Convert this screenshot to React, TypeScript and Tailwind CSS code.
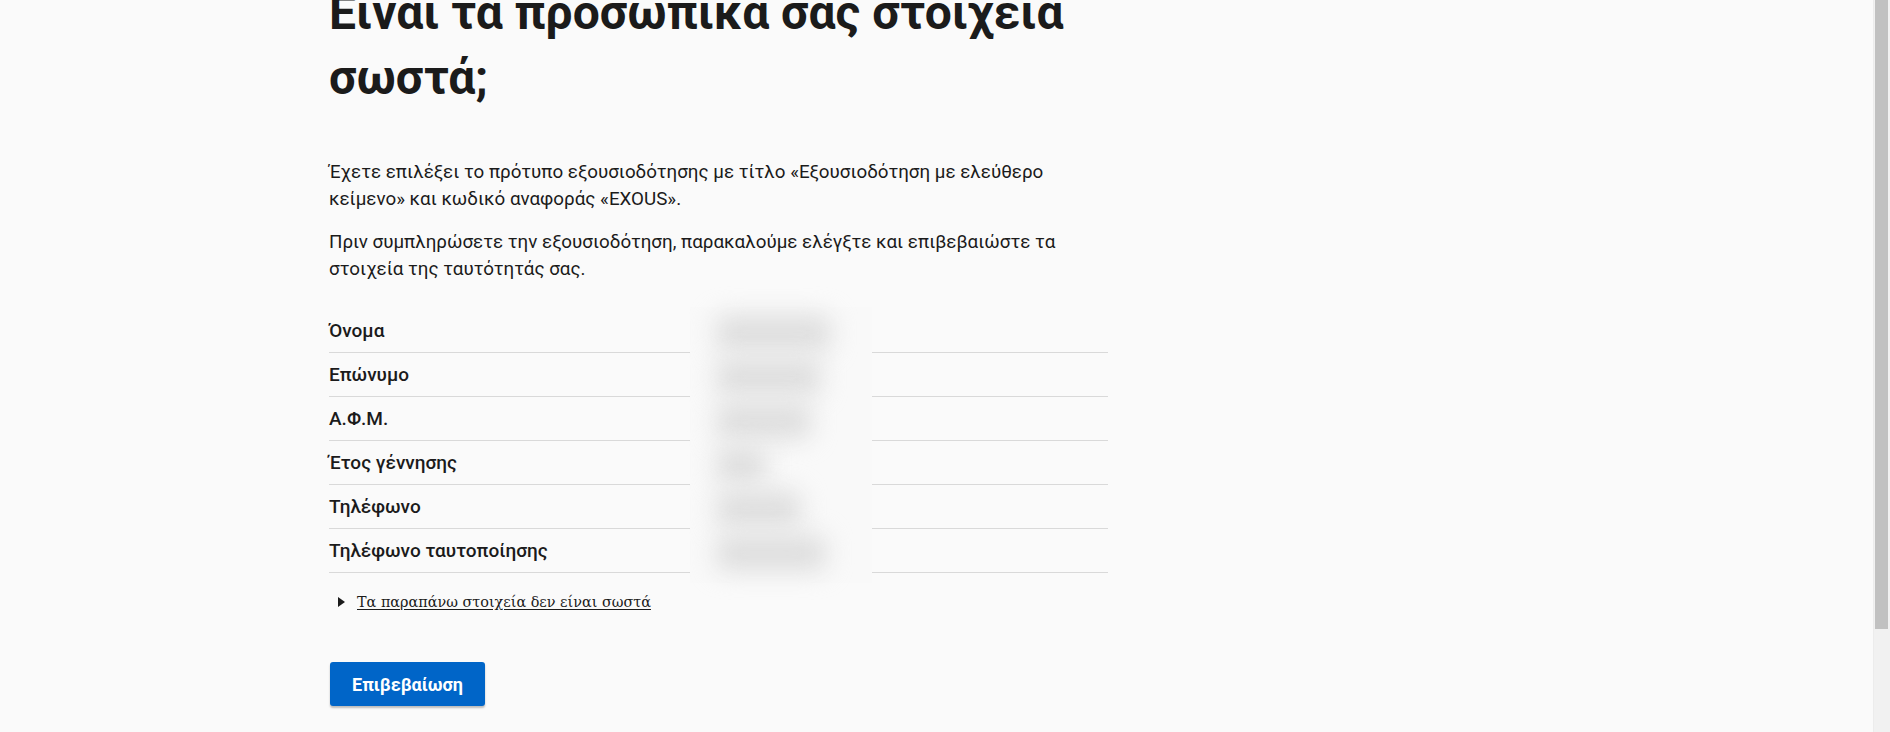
import React from "react";

const rows = [
  { label: "Όνομα", blob: "w-[115px]" },
  { label: "Επώνυμο", blob: "w-[105px]" },
  { label: "Α.Φ.Μ.", blob: "w-[95px]" },
  { label: "Έτος γέννησης", blob: "w-[50px]" },
  { label: "Τηλέφωνο", blob: "w-[85px]" },
  { label: "Τηλέφωνο ταυτοποίησης", blob: "w-[110px]" },
];

function Scrollbar() {
  return (
    <div className="w-[17px] shrink-0 bg-[#f1f1f1] border-l border-[#ececec]">
      <div className="h-[629px] ml-[1px] mr-[2px] bg-[#c1c1c1]" />
    </div>
  );
}

function DetailsList() {
  return (
    <div className="relative mt-[26px]">
      <dl>
        {rows.map((row) => (
          <div key={row.label} className="flex border-b border-[#d9d9d9] py-2">
            <dt className="text-[19px] leading-[27px] font-medium">{row.label}</dt>
          </div>
        ))}
      </dl>
      {/* blurred personal data */}
      <div className="absolute top-[-2px] left-[361px] w-[182px] h-[276px] bg-[#f9f9f9] flex flex-col gap-[8px] pt-[8px] pl-[26px]">
        {rows.map((row) => (
          <div key={row.label} className={`h-[36px] ${row.blob} bg-[#dedede] blur-[12px] rounded-[10px]`} />
        ))}
      </div>
    </div>
  );
}

export default function App() {
  return (
    <div
      className="h-[732px] flex overflow-hidden bg-[#fafafa] text-[#1b1b1b]"
      style={{ fontFamily: "Roboto, 'Noto Sans', sans-serif" }}
    >
      <main className="flex-1 min-w-0">
        <div className="mx-auto w-[1215px]">
          <div className="w-[779px] -mt-[20px]">
            <h1 className="text-[48px] leading-[65px] font-bold mb-[49px]">
              Είναι τα προσωπικά σας στοιχεία σωστά;
            </h1>
            <p className="text-[18.8px] leading-[27px] mb-4">
              Έχετε επιλέξει το πρότυπο εξουσιοδότησης με τίτλο «Εξουσιοδότηση με ελεύθερο
              κείμενο» και κωδικό αναφοράς «EXOUS».
            </p>
            <p className="text-[18.8px] leading-[27px]">
              Πριν συμπληρώσετε την εξουσιοδότηση, παρακαλούμε ελέγξτε και επιβεβαιώστε τα
              στοιχεία της ταυτότητάς σας.
            </p>

            <DetailsList />

            <div className="mt-[17px] flex items-center gap-[12px] pl-[9px]">
              <svg width="7" height="10" viewBox="0 0 7 10" className="shrink-0">
                <path d="M0 0 L7 5 L0 10 Z" fill="#1b1b1b" />
              </svg>
              <span
                className="text-[14.4px] leading-[24px] underline underline-offset-2"
                style={{ fontFamily: "'DejaVu Serif', serif" }}
              >
                Τα παραπάνω στοιχεία δεν είναι σωστά
              </span>
            </div>

            <button className="mt-[48px] ml-px h-[44px] px-[22px] rounded-[3px] bg-[#0065c8] text-white text-[18px] font-bold shadow-[0_2px_2px_rgba(0,0,0,0.25)]">
              Επιβεβαίωση
            </button>
          </div>
        </div>
      </main>
      <Scrollbar />
    </div>
  );
}
